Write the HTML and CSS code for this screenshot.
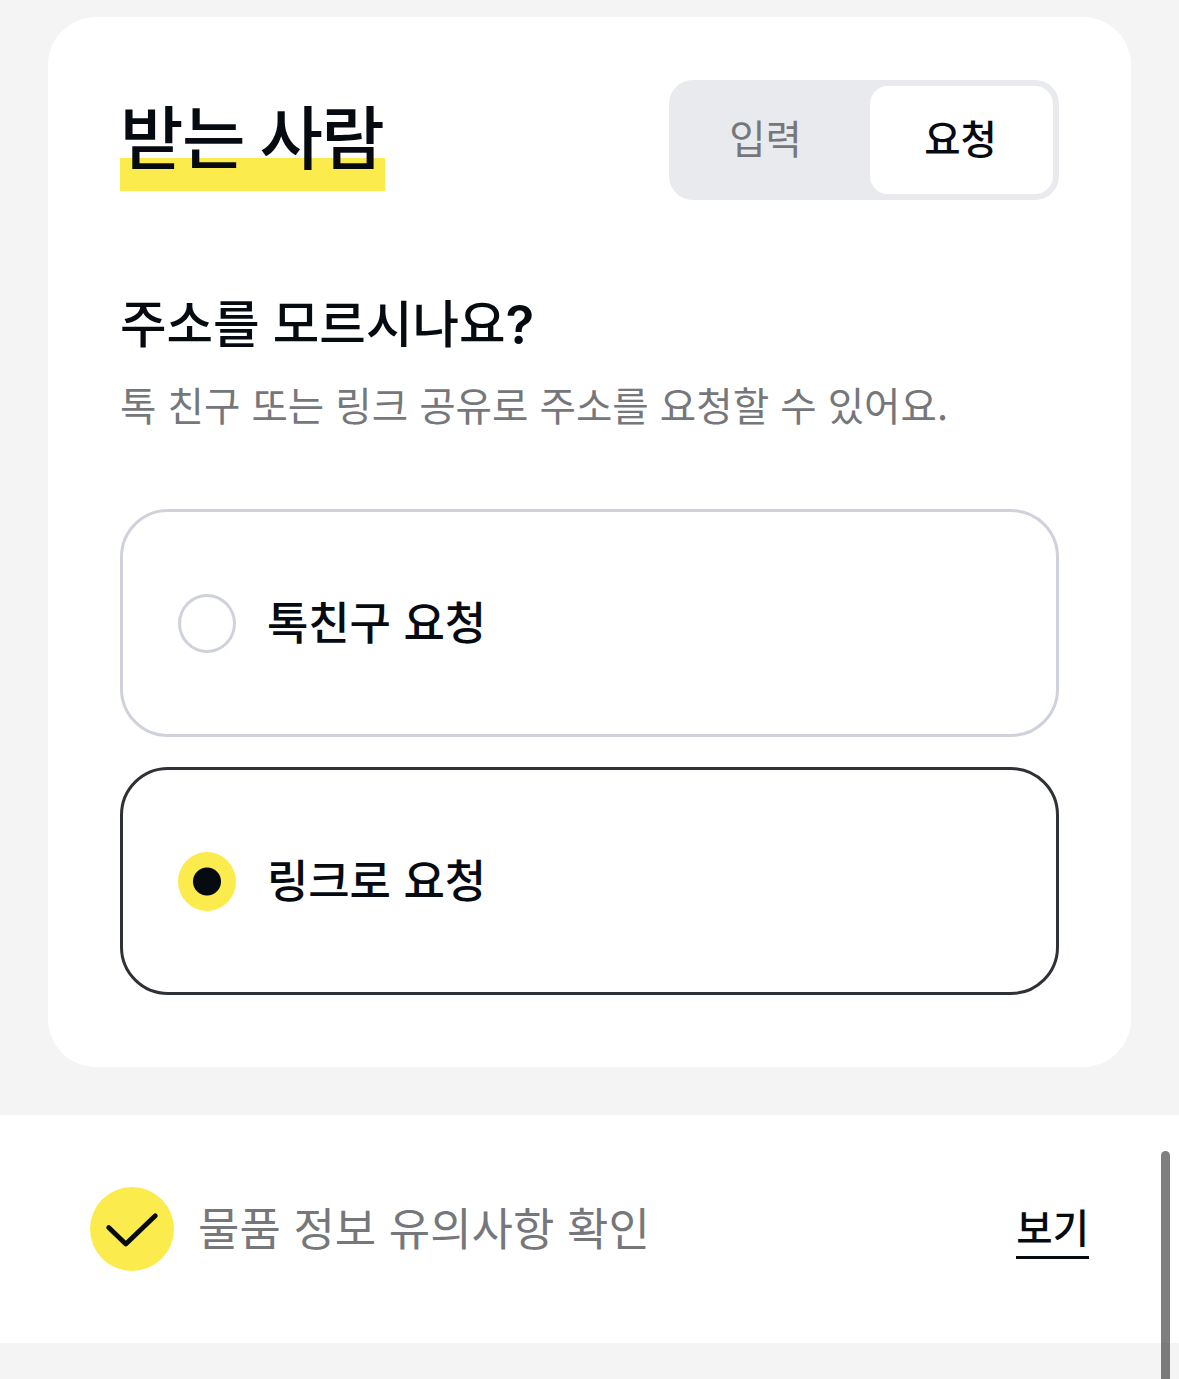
FILE: index.html
```html
<!DOCTYPE html>
<html lang="ko">
<head>
    <meta charset="UTF-8">
    <meta name="viewport" content="width=device-width, initial-scale=1.0">
    <title>받는 사람</title>
    <link rel="stylesheet" href="styles.css">
</head>
<body>

<main class="card">
    <header class="card-header">
        <h1 class="card-title">받는 사람</h1>
        <div class="tabs" role="tablist">
            <button class="tab" type="button" role="tab" aria-selected="false">입력</button>
            <button class="tab active" type="button" role="tab" aria-selected="true">요청</button>
        </div>
    </header>

    <h2 class="question">주소를 모르시나요<span class="mark">?</span></h2>
    <p class="description">톡 친구 또는 링크 공유로 주소를 요청할 수 있어요.</p>

    <form class="options">
        <label class="option">
            <input type="radio" name="request" value="friend">
            <span class="option-text">톡친구 요청</span>
        </label>
        <label class="option checked">
            <input type="radio" name="request" value="link" checked>
            <span class="option-text">링크로 요청</span>
        </label>
    </form>
</main>

<section class="notice">
    <svg class="notice-icon" viewBox="0 0 84 84" aria-hidden="true">
        <circle cx="42" cy="42" r="42" fill="#fbeb4d"/>
        <path d="M18.7 40.5 35.8 57 65.3 28.8" fill="none" stroke="#060b11" stroke-width="4.8" stroke-linecap="round" stroke-linejoin="round"/>
    </svg>
    <span class="notice-text">물품 정보 유의사항 확인</span>
    <a class="notice-link" href="#">보기</a>
</section>

<div class="scrollbar"></div>

<script>
    const radios = document.querySelectorAll('input[type="radio"]');
    radios.forEach(radio => {
        radio.addEventListener('change', () => {
            radios.forEach(r => r.parentElement.classList.toggle('checked', r.checked));
        });
    });
</script>

</body>
</html>
```
FILE: styles.css
```css
* {
    box-sizing: border-box;
}

body {
    margin: 0;
    height: 1379px;
    overflow: hidden;
    position: relative;
    padding-top: 17px;
    background-color: #f4f4f4;
    color: #060b11;
    font-family: "Noto Sans CJK KR", sans-serif;
}

.card {
    height: 1050px;
    margin: 0 48px;
    padding: 63px 72px 0;
    border-radius: 48px;
    background-color: #fff;
}

.card-header {
    display: flex;
    justify-content: space-between;
    height: 120px;
}

.card-title {
    width: 265px;
    height: 92px;
    margin: 19px 0 0;
    background: linear-gradient(#fbeb4d, #fbeb4d) bottom / 100% 33px no-repeat;
    font-size: 69px;
    font-weight: 500;
    line-height: 70px;
    letter-spacing: -1.6px;
    word-spacing: -2px;
    white-space: nowrap;
}

.tabs {
    display: flex;
    width: 390px;
    padding: 6px;
    border-radius: 24px;
    background-color: #e9eaee;
}

.tab {
    width: 195px;
    padding: 0 14px 6px 0;
    border: none;
    border-radius: 18px;
    background: none;
    color: #76777b;
    font-family: inherit;
    font-size: 39.5px;
    line-height: 56px;
}

.tab.active {
    width: 183px;
    padding-right: 2px;
    background-color: #fff;
    color: #060b11;
    font-weight: 500;
}

.question {
    height: 72px;
    margin: 85px 0 0;
    font-size: 50.6px;
    font-weight: 500;
    line-height: 72px;
    word-spacing: -1px;
}

.mark {
    position: relative;
    top: 1px;
    font-family: Inter, sans-serif;
    font-size: 53px;
    font-weight: 600;
    line-height: 1;
}

.description {
    margin: 17px 0 0;
    color: #76777b;
    font-size: 39.6px;
    line-height: 60px;
    white-space: nowrap;
}

.options {
    display: flex;
    flex-direction: column;
    gap: 30px;
    margin-top: 75px;
}

.option {
    display: flex;
    align-items: center;
    gap: 31px;
    height: 228px;
    padding-left: 55px;
    border: 3px solid #cfd2da;
    border-radius: 48px;
}

.option.checked {
    border-color: #2e3136;
}

.option input {
    appearance: none;
    -webkit-appearance: none;
    width: 58px;
    height: 59px;
    margin: 0;
    border: 3px solid #cfd2da;
    border-radius: 50%;
}

.option input:checked {
    border: none;
    background: radial-gradient(circle, #060b11 13.5px, #fbeb4d 14.5px);
}

.option-text {
    padding-bottom: 5px;
    font-size: 45px;
    font-weight: 500;
    line-height: 66px;
    letter-spacing: -0.1px;
}

.notice {
    display: flex;
    align-items: center;
    height: 228px;
    margin-top: 48px;
    padding: 0 90px;
    background-color: #fff;
}

.notice-icon {
    width: 84px;
    height: 84px;
    margin-right: 24px;
}

.notice-text {
    padding-bottom: 5px;
    color: #76777b;
    font-size: 45px;
    line-height: 66px;
}

.notice-link {
    margin-left: auto;
    padding-bottom: 5px;
    border-bottom: 3px solid #060b11;
    color: #060b11;
    font-size: 39.5px;
    font-weight: 500;
    line-height: 51px;
    text-decoration: none;
}

.scrollbar {
    position: absolute;
    top: 1151px;
    right: 9px;
    bottom: 0;
    width: 9px;
    border-radius: 5px 5px 0 0;
    background-color: rgba(0, 0, 0, 0.5);
}
```
